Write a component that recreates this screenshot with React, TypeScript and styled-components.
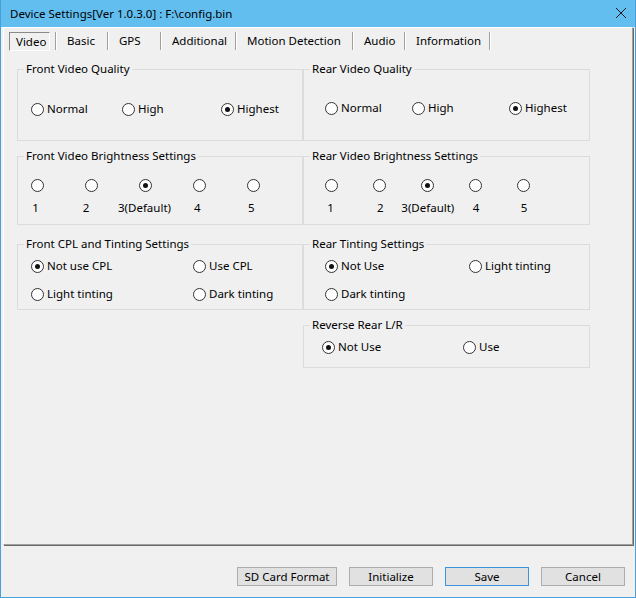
import React from "react";
import styled, { createGlobalStyle, css } from "styled-components";

const GlobalStyle = createGlobalStyle`
  html, body { margin: 0; padding: 0; background: #f0f0f0; }
  body {
    font-family: "Noto Sans", "Segoe UI", sans-serif;
    font-size: 11.5px;
    color: #000;
  }
  * { box-sizing: border-box; }
`;

const Window = styled.div`
  width: 636px;
  height: 598px;
  display: flex;
  flex-direction: column;
  background: #f0f0f0;
  border: 1px solid #4a9fd8;
  border-top: none;
`;

const TitleBar = styled.div`
  height: 27px;
  flex: none;
  display: flex;
  align-items: center;
  justify-content: space-between;
  background: #63bef0;
  padding: 0 9px 0 9px;
`;

const Title = styled.span`
  font-size: 11.5px;
  line-height: 14px;
  color: #000;
`;

const CloseIcon = styled.svg`
  width: 12px;
  height: 12px;
  margin-right: -1px;
  margin-bottom: 2px;
`;

const TabControl = styled.div`
  margin: 0 2px;
  height: 518px;
  flex: none;
  display: flex;
  flex-direction: column;
  border-style: solid;
  border-width: 1px;
  border-color: #ffffff #a0a0a0 #a0a0a0 #ffffff;
  box-shadow: 1px 1px 0 #696969;
`;

const TabStrip = styled.div`
  display: flex;
  align-items: flex-start;
  padding-top: 3px;
  height: 23px;
`;

const Tab = styled.div<{ $w: number; $selected?: boolean }>`
  width: ${(p) => p.$w}px;
  height: 20px;
  display: flex;
  align-items: center;
  padding-left: 10px;
  line-height: 14px;
  white-space: nowrap;
  ${(p) =>
    p.$selected &&
    css`
      width: ${p.$w - 10}px;
      height: 19px;
      margin: 1px 5px 0 5px;
      padding-left: 6px;
      border-style: solid;
      border-width: 1px;
      border-color: #8a8a8a #ffffff #ffffff #8a8a8a;
    `}
`;

const TabSep = styled.div`
  width: 2px;
  height: 18px;
  margin-top: 1px;
  border-left: 1px solid #a0a0a0;
  border-right: 1px solid #ffffff;
`;

const Page = styled.div`
  display: grid;
  grid-template-columns: 286px 287px;
  align-content: start;
  padding: 11px 0 0 13px;
`;

const Group = styled.fieldset<{ $h: number; $mt?: number; $col?: number }>`
  margin: ${(p) => p.$mt ?? 0}px 0 0 0;
  padding: 0;
  min-width: 0;
  height: ${(p) => p.$h}px;
  border: 1px solid #dcdcdc;
  ${(p) => p.$col && css`grid-column: ${p.$col};`}
`;

const Legend = styled.legend`
  margin-left: 6px;
  padding: 0 2px;
  line-height: 14px;
  white-space: nowrap;
`;

const Options = styled.div<{ $cols: string; $pt: number; $pl: number }>`
  display: grid;
  grid-template-columns: ${(p) => p.$cols};
  row-gap: 14px;
  align-items: center;
  padding: ${(p) => p.$pt}px 0 0 ${(p) => p.$pl}px;
`;

const RadioLabel = styled.label`
  display: inline-flex;
  align-items: center;
  gap: 3px;
  line-height: 14px;
  white-space: nowrap;
`;

const Circle = styled.span<{ $on?: boolean }>`
  width: 13px;
  height: 13px;
  flex: none;
  border: 1px solid #333333;
  border-radius: 50%;
  background: #ffffff;
  display: grid;
  place-items: center;
  &::after {
    content: "";
    width: 5px;
    height: 5px;
    border-radius: 50%;
    background: ${(p) => (p.$on ? "#111111" : "transparent")};
  }
`;

const LevelItem = styled.label`
  display: flex;
  flex-direction: column;
  align-items: flex-start;
  white-space: nowrap;
`;

const LevelText = styled.span<{ $dx: number }>`
  margin-top: 9px;
  margin-left: ${(p) => p.$dx}px;
  line-height: 14px;
`;

const Footer = styled.div`
  display: flex;
  justify-content: flex-end;
  gap: 12px;
  padding: 22px 10px 0 0;
`;

const Button = styled.button<{ $w: number; $default?: boolean }>`
  width: ${(p) => p.$w}px;
  height: 19px;
  padding: 0;
  font-family: inherit;
  font-size: 11.5px;
  line-height: 14px;
  color: #000;
  background: #e1e1e1;
  border: 1px solid ${(p) => (p.$default ? "#3d93dc" : "#adadad")};
  border-radius: 0;
`;

const Radio = ({ label, on }: { label: string; on?: boolean }) => (
  <RadioLabel>
    <Circle $on={on} />
    {label}
  </RadioLabel>
);

const tabs = [
  { name: "Video", w: 51 },
  { name: "Basic", w: 50 },
  { name: "GPS", w: 51 },
  { name: "Additional", w: 73 },
  { name: "Motion Detection", w: 115 },
  { name: "Audio", w: 50 },
  { name: "Information", w: 83 },
];

const levelsFront = [1.3, -2.3, -21, 1, 1];
const levelsRear = [2.3, 4, -19.7, 3.7, 3.7];
const levelNames = ["1", "2", "3(Default)", "4", "5"];

const Levels = ({ cols, pl, dx }: { cols: string; pl: number; dx: number[] }) => (
  <Options $cols={cols} $pt={16} $pl={pl}>
    {levelNames.map((n, i) => (
      <LevelItem key={n}>
        <Circle $on={i === 2} />
        <LevelText $dx={dx[i]}>{n}</LevelText>
      </LevelItem>
    ))}
  </Options>
);

export default function App() {
  return (
    <>
      <GlobalStyle />
      <Window>
        <TitleBar>
          <Title>Device Settings[Ver 1.0.3.0] : F:\config.bin</Title>
          <CloseIcon viewBox="0 0 12 12">
            <path d="M1 1 L11 11 M11 1 L1 11" stroke="#1a1a1a" strokeWidth="1" fill="none" />
          </CloseIcon>
        </TitleBar>
        <TabControl>
          <TabStrip>
            {tabs.map((t, i) => (
              <React.Fragment key={t.name}>
                <Tab $w={t.w} $selected={i === 0}>
                  {t.name}
                </Tab>
                <TabSep />
              </React.Fragment>
            ))}
          </TabStrip>
          <Page>
            <Group $h={79}>
              <Legend>Front Video Quality</Legend>
              <Options $cols="91px 99px auto" $pt={26} $pl={13}>
                <Radio label="Normal" />
                <Radio label="High" />
                <Radio label="Highest" on />
              </Options>
            </Group>
            <Group $h={79}>
              <Legend>Rear Video Quality</Legend>
              <Options $cols="87px 97px auto" $pt={25} $pl={21}>
                <Radio label="Normal" />
                <Radio label="High" />
                <Radio label="Highest" on />
              </Options>
            </Group>

            <Group $h={76} $mt={8}>
              <Legend>Front Video Brightness Settings</Legend>
              <Levels cols="repeat(5, 54px)" pl={13} dx={levelsFront} />
            </Group>
            <Group $h={76} $mt={8}>
              <Legend>Rear Video Brightness Settings</Legend>
              <Levels cols="repeat(5, 48px)" pl={21} dx={levelsRear} />
            </Group>

            <Group $h={73} $mt={12}>
              <Legend>Front CPL and Tinting Settings</Legend>
              <Options $cols="162px auto" $pt={8} $pl={13}>
                <Radio label="Not use CPL" on />
                <Radio label="Use CPL" />
                <Radio label="Light tinting" />
                <Radio label="Dark tinting" />
              </Options>
            </Group>
            <Group $h={73} $mt={12}>
              <Legend>Rear Tinting Settings</Legend>
              <Options $cols="144px auto" $pt={8} $pl={21}>
                <Radio label="Not Use" on />
                <Radio label="Light tinting" />
                <Radio label="Dark tinting" />
              </Options>
            </Group>

            <Group $h={50} $mt={8} $col={2}>
              <Legend>Reverse Rear L/R</Legend>
              <Options $cols="141px auto" $pt={8} $pl={18}>
                <Radio label="Not Use" on />
                <Radio label="Use" />
              </Options>
            </Group>
          </Page>
        </TabControl>
        <Footer>
          <Button $w={100}>SD Card Format</Button>
          <Button $w={84}>Initialize</Button>
          <Button $w={84} $default>
            Save
          </Button>
          <Button $w={84}>Cancel</Button>
        </Footer>
      </Window>
    </>
  );
}
